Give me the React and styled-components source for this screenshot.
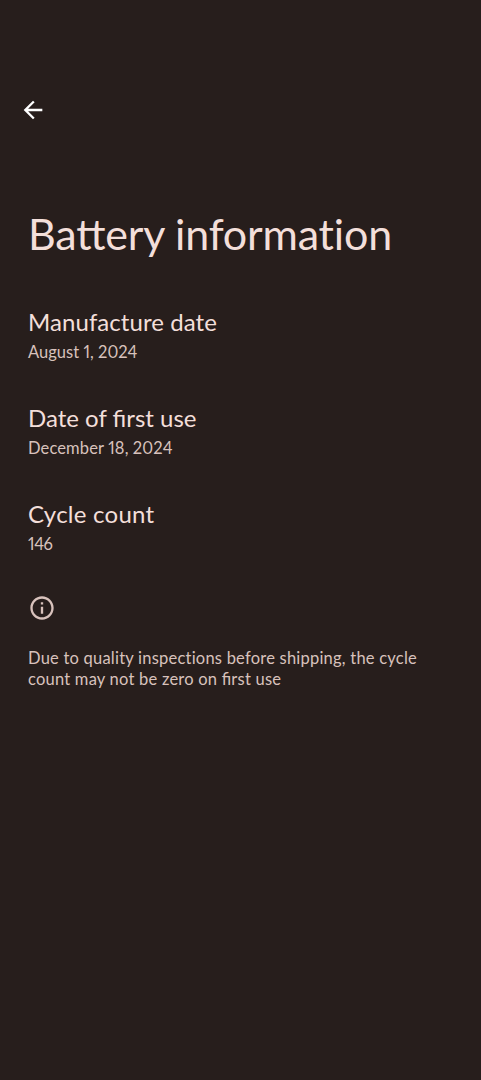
import React from "react";
import styled, { createGlobalStyle } from "styled-components";

const GlobalStyle = createGlobalStyle`
  * {
    box-sizing: border-box;
  }
  body {
    margin: 0;
    background-color: #271e1c;
  }
`;
// Screen
const Wrapper = styled.div`
  min-height: 1080px;
  padding: 96px 28px 0;
  background-color: #271e1c;
  color: #f3dfda;
  font-family: Lato, Roboto, sans-serif;
  font-feature-settings: "liga" 1;
`;
const BackButton = styled.button`
  display: block;
  width: 28px;
  height: 28px;
  margin-left: -9px;
  padding: 0;
  border: 0;
  background: none;
  color: #ffffff;
  cursor: pointer;
`;
const Title = styled.h1`
  margin: 82px 0 0;
  font-size: 43px;
  font-weight: 400;
  line-height: 56px;
  letter-spacing: -0.18px;
  white-space: nowrap;
`;
// Keeps "ti" as two separate letters
const Plain = styled.span`
  font-feature-settings: "liga" 0;
`;
const List = styled.div`
  display: flex;
  flex-direction: column;
  gap: 41px;
  margin-top: 45px;
`;
const Name = styled.div`
  font-size: 24px;
  line-height: 30px;
  letter-spacing: ${(props) => props.$spacing || 0}px;
`;
const Value = styled.div`
  margin-top: 5px;
  color: #d8c2bc;
  font-size: 16.5px;
  line-height: 20px;
  font-variant-numeric: proportional-nums;
  letter-spacing: ${(props) => props.$spacing || 0}px;
`;
const InfoIcon = styled.svg`
  display: block;
  margin-top: 40px;
`;
const Footer = styled.p`
  margin: 26px 0 0;
  color: #d8c2bc;
  font-size: 16.5px;
  line-height: 21px;
  letter-spacing: 0.22px;
  white-space: nowrap;
`;

const items = [
  {
    name: "Manufacture date",
    value: "August 1, 2024",
    nameSpacing: 0.07,
    valueSpacing: 0.03,
  },
  {
    name: "Date of first use",
    value: "December 18, 2024",
    nameSpacing: 0,
    valueSpacing: 0.13,
  },
  { name: "Cycle count", value: "146", nameSpacing: 0.25, valueSpacing: -0.4 },
];

function App() {
  return (
    <Wrapper>
      <GlobalStyle />
      <BackButton aria-label="Back">
        <svg width="28" height="28" viewBox="0 0 24 24" fill="currentColor">
          <path d="M20 11H7.83l5.59-5.59L12 4l-8 8 8 8 1.41-1.41L7.83 13H20v-2z" />
        </svg>
      </BackButton>
      <Title>
        Battery <Plain>information</Plain>
      </Title>
      <List>
        {items.map((item) => (
          <div key={item.name}>
            <Name $spacing={item.nameSpacing}>{item.name}</Name>
            <Value $spacing={item.valueSpacing}>{item.value}</Value>
          </div>
        ))}
      </List>
      <InfoIcon width="28" height="28" viewBox="0 0 24 24" fill="#d8c2bc">
        <path d="M11 7h2v2h-2zm0 4h2v6h-2zm1-9C6.48 2 2 6.48 2 12s4.48 10 10 10 10-4.48 10-10S17.52 2 12 2zm0 18c-4.41 0-8-3.59-8-8s3.59-8 8-8 8 3.59 8 8-3.59 8-8 8z" />
      </InfoIcon>
      <Footer>
        Due to quality <Plain>inspections</Plain> before shipping, the cycle
        <br />
        count may not be zero on first use
      </Footer>
    </Wrapper>
  );
}

export default App;
